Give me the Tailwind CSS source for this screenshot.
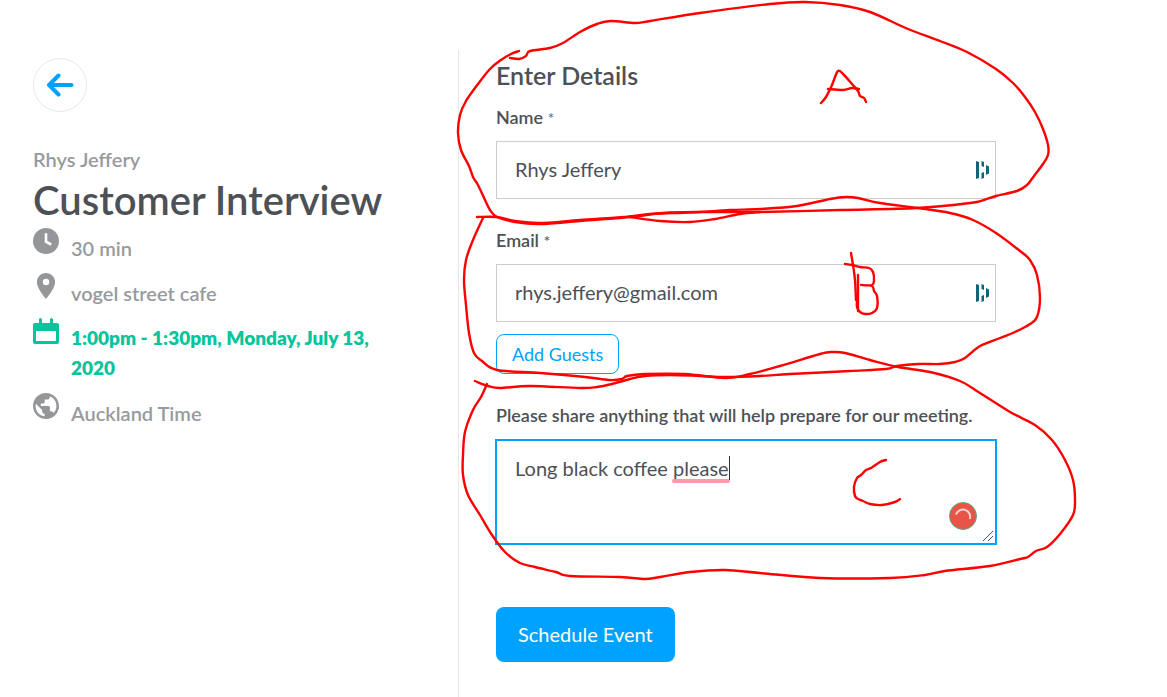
<!DOCTYPE html>
<html lang="en">
<head>
    <meta charset="UTF-8">
    <meta name="viewport" content="width=device-width, initial-scale=1.0">
    <title>Customer Interview - Enter Details</title>
    <script src="https://cdn.jsdelivr.net/npm/@tailwindcss/browser@4"></script>
</head>
<body class="relative min-h-screen overflow-x-hidden bg-white font-['Lato','Liberation_Sans',sans-serif] text-[#4d5055]">
    <div class="flex min-h-screen pt-[50px]">

        <!-- Event summary -->
        <aside class="w-[458px] shrink-0 pt-2 pl-[33px] pr-14">
            <button type="button" aria-label="Back" class="flex size-[54px] items-center justify-center rounded-full border border-[#e8e8e8]">
                <svg class="h-6 w-7" viewBox="0 0 28 24" fill="none" stroke="#00a2ff" stroke-width="4" stroke-linecap="round" stroke-linejoin="round">
                    <path d="M25.500 12H3M12.500 2.500L3 12l9.500 9.500"/>
                </svg>
            </button>
            <p class="mt-[31px] text-[20px] leading-8 font-semibold text-[#989a9d]">Rhys Jeffery</p>
            <h1 class="text-[40px] leading-[50px] font-semibold">Customer Interview</h1>
            <ul class="mt-[3px] flex flex-col gap-[10px] text-[20px] leading-[30px] font-semibold text-[#989a9d]">
                <li class="flex gap-3">
                    <svg class="size-[26px] shrink-0" viewBox="2 2 20 20"><circle cx="12" cy="12" r="10" fill="#94969a"/><path d="M12 6v6.500l4 2.200" fill="none" stroke="#fff" stroke-width="2"/></svg>
                    <span class="pt-[5px]">30 min</span>
                </li>
                <li class="flex gap-3">
                    <svg class="size-[26px] shrink-0" viewBox="2 2 20 20" fill="#94969a"><path d="M12 2C8.130 2 5 5.130 5 9c0 5.250 7 13 7 13s7-7.750 7-13c0-3.870-3.130-7-7-7zm0 9.500a2.500 2.500 0 1 1 0-5 2.500 2.500 0 0 1 0 5z"/></svg>
                    <span class="pt-[5px]">vogel street cafe</span>
                </li>
                <li class="flex gap-3 font-extrabold text-[#06c49c]">
                    <svg class="size-[26px] shrink-0" viewBox="0 0 26 26" fill="currentColor"><path fill-rule="evenodd" d="M6 1.500a1.500 1.500 0 0 1 3 0V5h8V1.500a1.500 1.500 0 0 1 3 0V5h4a2 2 0 0 1 2 2v17a2 2 0 0 1-2 2H2a2 2 0 0 1-2-2V7a2 2 0 0 1 2-2h4zM3 13v10h20V13z"/></svg>
                    <span class="pt-[5px] text-[19px]">1:00pm - 1:30pm, Monday, July 13, 2020</span>
                </li>
                <li class="flex gap-3">
                    <svg class="size-[26px] shrink-0" viewBox="2 2 20 20" fill="#94969a"><path d="M12 2C6.480 2 2 6.480 2 12s4.480 10 10 10 10-4.480 10-10S17.520 2 12 2zm-1 17.930c-3.950-.49-7-3.850-7-7.930 0-.62.08-1.210.21-1.790L9 15v1c0 1.100.9 2 2 2v1.930zm6.900-2.540c-.26-.81-1-1.390-1.900-1.390h-1v-3c0-.55-.45-1-1-1H8v-2h2c.55 0 1-.45 1-1V7h2c1.100 0 2-.9 2-2v-.41c2.930 1.190 5 4.060 5 7.410 0 2.080-.8 3.970-2.100 5.390z"/></svg>
                    <span class="pt-[5px]">Auckland Time</span>
                </li>
            </ul>
        </aside>

        <!-- Details form -->
        <main class="flex-1 border-l border-[#e8e8e8] pt-2 pl-[37px] pr-4">
            <form class="max-w-[500px]">
                <h2 class="text-[25px] leading-[34px] font-semibold">Enter Details</h2>
                <label for="name" class="mt-[13px] block text-[18px] leading-6 font-semibold">Name <span class="text-[16px] leading-none font-normal text-[#36719b]">*</span></label>
                <div class="relative mt-3">
                    <input id="name" type="text" value="Rhys Jeffery" class="block h-[58px] w-full border border-[#ccc] pr-10 pb-0.5 pl-[18px] text-[20px] outline-none">
                    <svg class="absolute top-[19px] right-[6px] h-5 w-[14px]" viewBox="0 0 14 20" fill="#0e6578"><path d="M0 1l3 1v16l-3 1zM5.500 1l2.500 1v5l-2.500-1zM5.500 13l2.500-1v6l-2.500 1zM10 5l3 1.500v7L10 15z"/></svg>
                </div>
                <label for="email" class="mt-[29px] block text-[18px] leading-6 font-semibold">Email <span class="text-[16px] leading-none font-normal">*</span></label>
                <div class="relative mt-3">
                    <input id="email" type="email" value="rhys.jeffery@gmail.com" class="block h-[58px] w-full border border-[#ccc] pr-10 pb-0.5 pl-[18px] text-[20px] outline-none">
                    <svg class="absolute top-[19px] right-[6px] h-5 w-[14px]" viewBox="0 0 14 20" fill="#0e6578"><path d="M0 1l3 1v16l-3 1zM5.500 1l2.500 1v5l-2.500-1zM5.500 13l2.500-1v6l-2.500 1zM10 5l3 1.500v7L10 15z"/></svg>
                </div>
                <button type="button" class="mt-3 block h-10 rounded-lg border border-[#00a2ff] px-[15px] text-[18px] text-[#00a2ff]">Add Guests</button>
                <label for="notes" class="mt-[29px] block text-[18px] leading-6 font-semibold">Please share anything that will help prepare for our meeting.</label>
                <div class="relative -mx-px mt-3">
                    <textarea id="notes" spellcheck="false" class="block h-[106px] w-full resize-none border-2 border-[#00a2ff] px-[18px] py-3 text-[20px] leading-[30px] outline-none">Long black coffee please</textarea>
                    <!-- Spelling mark, cursor and checker badge -->
                    <span class="absolute top-[40px] left-[177px] h-1 w-[58px] rounded-full bg-[#ff99ab]"></span>
                    <span class="absolute top-[17px] left-[234px] h-6 w-px bg-[#333]"></span>
                    <svg class="absolute right-5 bottom-[15px] size-7" viewBox="0 0 28 28" fill="none"><circle cx="14" cy="14" r="13.500" fill="#e85446" stroke="#4fae8e"/><path d="M7 12.500a7.200 7.200 0 1 1 13.800 4.500" stroke="#fbd5d1" stroke-width="2"/></svg>
                    <svg class="absolute right-1 bottom-1 size-[10px]" viewBox="0 0 10 10" stroke="#555"><path d="M0 10L10 0M5 10l5-5"/></svg>
                </div>
                <button type="submit" class="mt-[62px] block h-[55px] rounded-lg bg-[#00a2ff] px-[22px] pb-0.5 text-[20px] text-white">Schedule Event</button>
            </form>
        </main>
    </div>

    <!-- Pen marks -->
    <svg id="ink" class="pointer-events-none absolute top-0 left-0 h-[697px] w-[1167px]" viewBox="0 0 1167 697" fill="none" stroke="#ff0000" stroke-width="2.400" stroke-linecap="round" stroke-linejoin="round"></svg>

    <script>
        const strokes = [
            // loop A
            '519,51 511,54 501,60 490,69 478,84 466,101 460,115 458,133 461,150 469,166 473,177 478,185 485,200 490,210 497,217 515,222 540,224 580,221 630,217 663,213 700,212 760,212 840,210 917,208 970,203 984,200 996,196 1017,191 1027,185 1034,176 1043,164 1048,155 1048,145 1043,129 1035,112 1025,97 1013,83 996,69 967,52 940,41 908,29 870,12 840,5 805,2 770,4 700,13 650,21 635,23 611,21 597,24 580,32 563,43 550,48 530,51 526,56 519,59 510,58',
            // letter A
            '821,103 826,97 832,85 838,71 844,75 852,84 858,91 860,96 864,98 866,102',
            '828,89 843,90 852,88 859,89',
            // loop B
            '477,217 497,217 515,221 540,223 580,220 625,217 650,214 675,213 700,212 730,210 760,209 797,206 830,199 846,197 858,198 880,203 918,208 950,213 973,220 996,233 1020,251 1030,260 1037,275 1040,298 1037,317 1030,324 1015,332 1000,338 980,346 965,358 955,362 940,364 918,364 897,366 886,369 850,371 790,374 760,376 725,377 700,376 670,375 645,376 630,379 612,384 597,387 580,388 530,386 500,388 488,386 475,381',
            '630,217 660,221 690,222 715,219 740,214 760,212',
            '483,218 473,240 466,260 464,280 466,305 469,333 474,353 482,361 497,370 540,373 585,377 609,380 622,379 627,376 645,374 685,374 725,378 750,374 780,366 820,354 833,352 845,353 870,360 898,367 930,372 960,381 980,393 1010,412 1035,425 1052,440 1065,460 1073,480 1075,500 1073,515 1060,534 1047,547 1036,551 1028,557 1020,559 990,566 945,571 925,575 890,578 820,578 760,573 725,570 690,572 660,577 645,579 620,577 570,576 556,572 535,567 520,563 505,552 492,535 480,515 468,495 463,475 463,455 465,432 473,410 481,397 487,384',
            // letter B
            '851,253 853,265 855,280 856,300',
            '845,264 852,265 860,267 869,268 873,272 874,280 872,285 861,285 872,286 874,291 877,296 877,308 872,313 865,314 860,312 857,307 857,300',
            '858,275 858,295 858,311',
            // letter C
            '886,460 880,462 871,468 866,470 861,475 857,478 854,487 855,496 858,499 863,501 870,504 882,505 895,502 900,499'
        ];

        // Catmull-Rom through the points
        document.getElementById('ink').innerHTML = strokes.map(s => {
            const p = s.split(' ').map(n => n.split(',').map(Number));
            let d = `M${p[0]}`;
            for (let i = 0; i < p.length - 1; i++) {
                const a = p[i - 1] || p[i], b = p[i], c = p[i + 1], e = p[i + 2] || c;
                d += `C${b[0] + (c[0] - a[0]) / 6},${b[1] + (c[1] - a[1]) / 6} ${c[0] - (e[0] - b[0]) / 6},${c[1] - (e[1] - b[1]) / 6} ${c}`;
            }
            return `<path d="${d}"/>`;
        }).join('');
    </script>
</body>
</html>
